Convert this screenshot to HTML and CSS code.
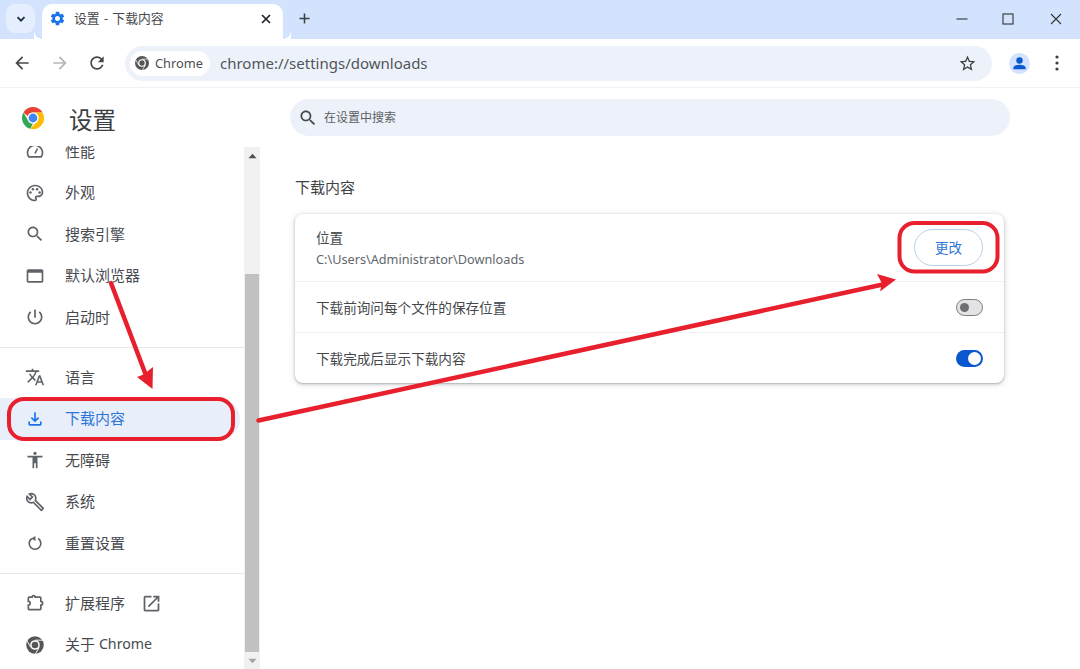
FILE: index.html
```html
<!DOCTYPE html>
<html lang="zh-CN">
<head>
<meta charset="utf-8">
<title>设置 - 下载内容</title>
<link rel="stylesheet" href="styles.css">
</head>
<body>
<header class="tabstrip">
  <div class="tabsearch"><svg class="ic12" viewBox="0 0 12 12"><path d="M2.5 4.2 6 7.7l3.5-3.5" fill="none" stroke="#1f2a44" stroke-width="1.8"/></svg></div>
  <div class="tab">
    <svg class="tabicon" viewBox="0 0 24 24"><path fill="#1a73e8" d="M19.14 12.94c.04-.3.06-.61.06-.94 0-.32-.02-.64-.07-.94l2.03-1.58c.18-.14.23-.41.12-.61l-1.92-3.32c-.12-.22-.37-.29-.59-.22l-2.39.96c-.5-.38-1.03-.7-1.62-.94l-.36-2.54c-.04-.24-.24-.41-.48-.41h-3.84c-.24 0-.43.17-.47.41l-.36 2.54c-.59.24-1.13.57-1.62.94l-2.39-.96c-.22-.08-.47 0-.59.22L2.74 8.87c-.12.21-.08.47.12.61l2.03 1.58c-.05.3-.09.63-.09.94s.02.64.07.94l-2.03 1.58c-.18.14-.23.41-.12.61l1.92 3.32c.12.22.37.29.59.22l2.39-.96c.5.38 1.03.7 1.62.94l.36 2.54c.05.24.24.41.48.41h3.84c.24 0 .44-.17.47-.41l.36-2.54c.59-.24 1.13-.56 1.62-.94l2.39.96c.22.08.47 0 .59-.22l1.92-3.32c.12-.22.07-.47-.12-.61l-2.01-1.58zM12 15.6c-1.98 0-3.6-1.62-3.6-3.6s1.62-3.6 3.6-3.6 3.6 1.62 3.6 3.6-1.62 3.6-3.6 3.6z"/></svg>
    <span class="tabtitle">设置 - 下载内容</span>
    <svg class="ic12" viewBox="0 0 12 12"><path d="M2 2l8 8M10 2l-8 8" stroke="#1f2329" stroke-width="1.7"/></svg>
  </div>
  <svg class="newtab" viewBox="0 0 12 12"><path d="M6 .5v11M.5 6h11" stroke="#3c4043" stroke-width="1.7"/></svg>
  <div class="winctl">
    <svg class="ic12" viewBox="0 0 12 12"><path d="M.5 6h11" stroke="#333" stroke-width="1.1"/></svg>
    <svg class="ic12" viewBox="0 0 12 12"><rect x="1" y="1" width="10" height="10" fill="none" stroke="#333" stroke-width="1.1"/></svg>
    <svg class="ic12" viewBox="0 0 12 12"><path d="M1 1l10 10M11 1L1 11" stroke="#333" stroke-width="1.1"/></svg>
  </div>
</header>

<div class="toolbar">
  <svg class="tbicon" viewBox="0 0 24 24"><path fill="#474747" d="M20 11H7.83l5.59-5.59L12 4l-8 8 8 8 1.41-1.41L7.83 13H20v-2z"/></svg>
  <svg class="tbicon" viewBox="0 0 24 24"><path fill="#b4b6b9" d="M4 11h12.17l-5.59-5.59L12 4l8 8-8 8-1.41-1.41L16.17 13H4v-2z"/></svg>
  <svg class="tbicon" viewBox="0 0 24 24"><path fill="#474747" d="M17.65 6.35C16.2 4.9 14.21 4 12 4c-4.42 0-7.99 3.58-7.99 8s3.57 8 7.99 8c3.73 0 6.84-2.55 7.73-6h-2.08c-.82 2.33-3.04 4-5.65 4-3.31 0-6-2.69-6-6s2.69-6 6-6c1.66 0 3.14.69 4.22 1.78L13 11h7V4l-2.35 2.35z"/></svg>
  <div class="omnibox">
    <div class="chip">
      <svg class="chipicon" viewBox="0 0 24 24"><use href="#mono-chrome"/></svg>
      <span>Chrome</span>
    </div>
    <span class="url">chrome://settings/downloads</span>
    <svg class="star" viewBox="0 0 24 24"><path fill="#3c4043" d="M22 9.24l-7.19-.62L12 2 9.19 8.63 2 9.24l5.46 4.73L5.82 21 12 17.27 18.18 21l-1.63-7.03L22 9.24zM12 15.4l-3.76 2.27 1-4.28-3.32-2.88 4.38-.38L12 6.1l1.71 4.04 4.38.38-3.32 2.88 1 4.28L12 15.4z"/></svg>
  </div>
  <div class="avatar"><svg viewBox="0 0 20 20"><circle cx="10" cy="6.8" r="3.4" fill="#0b57d0"/><path fill="#0b57d0" d="M3.5 16v-1.3c0-2.2 3.6-3.4 6.5-3.4s6.5 1.2 6.5 3.4V16z"/></svg></div>
  <svg class="menu" viewBox="0 0 4 16"><circle cx="2" cy="2" r="1.6" fill="#3c4043"/><circle cx="2" cy="8" r="1.6" fill="#3c4043"/><circle cx="2" cy="14" r="1.6" fill="#3c4043"/></svg>
</div>

<svg class="defs" aria-hidden="true"><defs>
  <g id="mono-chrome">
    <circle cx="12" cy="12" r="10.500" fill="#555"/>
    <circle cx="12" cy="12" r="5.800" fill="#fff"/>
    <circle cx="12" cy="12" r="4" fill="#555"/>
    <path d="M12 6.200h10M7 15 2.200 6.600M17 15l-5 8.600" stroke="#fff" stroke-width="1.100"/>
  </g>
</defs></svg>

<div class="page">
  <aside class="sidebar">
    <div class="brand">
      <svg class="logo" viewBox="0 0 24 24">
        <path fill="#ea4335" d="M12 1a11 11 0 0 1 9.53 5.5H12a5.5 5.5 0 0 0-5.2 3.7L2.47 6.5A11 11 0 0 1 12 1z"/>
        <path fill="#34a853" d="M2.47 6.5 7.2 14.7A5.5 5.5 0 0 0 12 17.5L9.3 22.7A11 11 0 0 1 2.47 6.5z"/>
        <path fill="#fbbc04" d="M21.53 6.5A11 11 0 0 1 9.3 22.7L14.8 16.7A5.5 5.5 0 0 0 12 6.5z"/>
        <circle cx="12" cy="12" r="5.6" fill="#fff"/>
        <circle cx="12" cy="12" r="4.4" fill="#4285f4"/>
      </svg>
      <h1 class="brandtitle">设置</h1>
    </div>
    <div class="sidebody">
      <nav class="nav">
        <div class="navscroll">
          <a class="item"><svg class="navicon" viewBox="0 0 24 24"><path fill="none" stroke="#5f6368" stroke-width="2" d="M4.5 19a9 9 0 1 1 15 0zM12 15l3-6"/></svg>性能</a>
          <a class="item"><svg class="navicon" viewBox="0 0 24 24"><path fill="#5f6368" d="M12 22C6.49 22 2 17.51 2 12S6.49 2 12 2s10 4.04 10 9c0 3.31-2.69 6-6 6h-1.77c-.28 0-.5.22-.5.5 0 .12.05.23.13.33.41.47.64 1.06.64 1.67A2.5 2.5 0 0 1 12 22zm0-18c-4.41 0-8 3.59-8 8s3.59 8 8 8c.28 0 .5-.22.5-.5a.54.54 0 0 0-.14-.35c-.41-.46-.63-1.05-.63-1.65a2.5 2.5 0 0 1 2.5-2.5H16c2.21 0 4-1.79 4-4 0-3.86-3.59-7-8-7z"/><circle cx="6.5" cy="11.5" r="1.5" fill="#5f6368"/><circle cx="9.5" cy="7.5" r="1.5" fill="#5f6368"/><circle cx="14.5" cy="7.5" r="1.5" fill="#5f6368"/><circle cx="17.5" cy="11.5" r="1.5" fill="#5f6368"/></svg>外观</a>
          <a class="item"><svg class="navicon" viewBox="0 0 24 24"><path fill="#5f6368" d="M15.5 14h-.79l-.28-.27C15.41 12.59 16 11.11 16 9.5 16 5.91 13.09 3 9.5 3S3 5.91 3 9.5 5.91 16 9.5 16c1.61 0 3.09-.59 4.23-1.57l.27.28v.79l5 4.99L20.49 19l-4.99-5zm-6 0C7.01 14 5 11.99 5 9.5S7.01 5 9.5 5 14 7.01 14 9.5 11.99 14 9.5 14z"/></svg>搜索引擎</a>
          <a class="item"><svg class="navicon" viewBox="0 0 24 24"><path fill="#5f6368" d="M20 4H4c-1.1 0-2 .9-2 2v12c0 1.1.9 2 2 2h16c1.1 0 2-.9 2-2V6c0-1.1-.9-2-2-2zm0 14H4V8h16v10z"/></svg>默认浏览器</a>
          <a class="item"><svg class="navicon" viewBox="0 0 24 24"><path fill="#5f6368" d="M13 3h-2v10h2V3zm4.83 2.17l-1.42 1.42C17.99 7.86 19 9.81 19 12c0 3.87-3.13 7-7 7s-7-3.13-7-7c0-2.19 1.01-4.14 2.58-5.42L6.17 5.17C4.23 6.82 3 9.26 3 12c0 4.97 4.03 9 9 9s9-4.03 9-9c0-2.74-1.23-5.18-3.17-6.83z"/></svg>启动时</a>
          <hr class="sep">
          <a class="item"><svg class="navicon" viewBox="0 0 24 24"><path fill="#5f6368" d="M12.87 15.07l-2.54-2.51.03-.03c1.74-1.94 2.98-4.17 3.71-6.53H17V4h-7V2H8v2H1v1.99h11.17C11.5 7.92 10.44 9.75 9 11.35 8.07 10.32 7.3 9.19 6.69 8h-2c.73 1.63 1.73 3.17 2.98 4.56l-5.09 5.02L4 19l5-5 3.11 3.11.76-2.04zM18.5 10h-2L12 22h2l1.12-3h4.75L21 22h2l-4.5-12zm-2.62 7l1.62-4.33L19.12 17h-3.24z"/></svg>语言</a>
          <a class="item active"><svg class="navicon" viewBox="0 0 24 24"><path fill="#1a73e8" d="M12 16l-5-5 1.4-1.45 2.6 2.6V4h2v8.15l2.6-2.6L17 11l-5 5zM6 20c-.55 0-1.02-.2-1.41-.59C4.2 19.02 4 18.55 4 18v-3h2v3h12v-3h2v3c0 .55-.2 1.02-.59 1.41-.39.39-.86.59-1.41.59H6z"/></svg>下载内容</a>
          <a class="item"><svg class="navicon" viewBox="0 0 24 24"><path fill="#5f6368" d="M12 2c1.1 0 2 .9 2 2s-.9 2-2 2-2-.9-2-2 .9-2 2-2zm9 7h-6v13h-2v-6h-2v6H9V9H3V7h18v2z"/></svg>无障碍</a>
          <a class="item"><svg class="navicon" viewBox="0 0 24 24"><path fill="#5f6368" d="M22.61 18.99l-9.08-9.08c.93-2.34.45-5.1-1.44-7C9.79.61 6.21.4 3.66 2.25L7.5 6.1 6.08 7.51 2.25 3.69C.4 6.23.61 9.82 2.91 12.11c1.86 1.86 4.57 2.35 6.89 1.48l9.11 9.11c.39.39 1.02.39 1.41 0l2.3-2.3c.39-.38.39-1.01-.01-1.41zm-3 1.6l-9.46-9.46c-.61.45-1.29.72-2 .82-1.36.2-2.79-.21-3.83-1.25C3.37 9.76 2.93 8.5 3 7.26l3.09 3.09 4.24-4.24-3.09-3.09c1.24-.07 2.49.37 3.44 1.31 1.08 1.08 1.49 2.57 1.24 3.96-.12.71-.42 1.37-.88 1.96l9.45 9.45-.88.88z"/></svg>系统</a>
          <a class="item"><svg class="navicon" viewBox="0 0 24 24"><path fill="none" stroke="#5f6368" stroke-width="2" d="M8.2 6.6a7 7 0 1 0 7.6 0"/><path fill="#5f6368" d="M12.5 3.5v6L7.5 6.5z"/></svg>重置设置</a>
          <hr class="sep">
          <a class="item"><svg class="navicon" viewBox="0 0 24 24"><path fill="none" stroke="#5f6368" stroke-width="2" d="M4.500 5H8.500a1.800 1.800 0 0 1 3.600 0H18a1 1 0 0 1 1 1v4a2.200 2.200 0 0 1 0 4.400V19a1 1 0 0 1-1 1H5a1 1 0 0 1-1-1v-4.500a2.200 2.200 0 0 0 0-4.400V6a1 1 0 0 1 .5-1z"/></svg>扩展程序<svg class="external" viewBox="0 0 24 24"><path fill="#5f6368" d="M19 19H5V5h7V3H5c-1.110 0-2 .9-2 2v14c0 1.100.89 2 2 2h14c1.100 0 2-.9 2-2v-7h-2v7zM14 3v2h3.590l-9.830 9.830 1.410 1.410L19 6.410V10h2V3h-7z"/></svg></a>
          <a class="item"><svg class="navicon" viewBox="0 0 24 24"><use href="#mono-chrome"/></svg>关于&nbsp;<span class="latin">Chrome</span></a>
        </div>
      </nav>
      <div class="scrollbar">
        <svg class="sbarrow" viewBox="0 0 10 6"><path d="M5 .5 9.500 5.500H.5z" fill="#505050"/></svg>
        <div class="sbtrack"><div class="sbthumb"></div></div>
        <svg class="sbarrow" viewBox="0 0 10 6"><path d="M5 5.500.5.500h9z" fill="#a3a3a3"/></svg>
      </div>
    </div>
  </aside>

  <main class="content">
    <div class="search">
      <svg class="searchicon" viewBox="0 0 24 24"><path fill="#474747" d="M15.500 14h-.79l-.28-.27C15.410 12.590 16 11.110 16 9.500 16 5.910 13.090 3 9.500 3S3 5.910 3 9.500 5.910 16 9.500 16c1.610 0 3.090-.59 4.230-1.570l.27.28v.79l5 4.990L20.490 19l-4.990-5zm-6 0C7.010 14 5 11.990 5 9.500S7.010 5 9.500 5 14 7.010 14 9.500 11.990 14 9.500 14z"/></svg>
      <span class="searchtext">在设置中搜索</span>
    </div>
    <h2 class="section">下载内容</h2>
    <section class="card">
      <div class="row first">
        <div class="rowtext">
          <div class="label">位置</div>
          <div class="sublabel">C:\Users\Administrator\Downloads</div>
        </div>
        <button class="change">更改</button>
      </div>
      <div class="row">
        <div class="label">下载前询问每个文件的保存位置</div>
        <span class="toggle off"><i></i></span>
      </div>
      <div class="row">
        <div class="label">下载完成后显示下载内容</div>
        <span class="toggle on"><i></i></span>
      </div>
    </section>
  </main>
</div>

<svg class="annotations" viewBox="0 0 1080 669">
  <rect class="mark" x="9" y="399" width="224" height="40" rx="15"/>
  <rect class="mark" x="899.500" y="223" width="98" height="48.500" rx="15"/>
  <path class="shaft" d="M111 283 147 378"/>
  <path class="head" d="M152.500 389 137 377 143.500 374.500 153 367z"/>
  <path class="shaft" d="M258.500 420.500 885 284"/>
  <path class="head" d="M896 279.500 877 274 882 283.500 880 291.500z"/>
</svg>
</body>
</html>
```
FILE: styles.css
```css
* { box-sizing: border-box; }
html, body { height: 100%; }
body {
  margin: 0;
  width: 1080px;
  height: 669px;
  overflow: hidden;
  position: relative;
  display: flex;
  flex-direction: column;
  background: #fff;
  color: #3c4043;
  font-family: "Noto Sans", "Noto Sans CJK SC", sans-serif;
}
svg { display: block; flex: none; }
.defs { width: 0; height: 0; position: absolute; }
.ic12 { width: 12px; height: 12px; }

.tabstrip {
  height: 39px;
  flex: none;
  background: #d3e3fd;
  display: flex;
  align-items: flex-start;
  padding: 4px 0 0 6px;
}
.tabsearch {
  width: 29px;
  height: 29px;
  border-radius: 9px;
  background: #e5eefc;
  display: flex;
  align-items: center;
  justify-content: center;
}
.tab {
  position: relative;
  margin-left: 7px;
  width: 241px;
  height: 35px;
  background: #fff;
  border-radius: 10px 10px 0 0;
  display: flex;
  align-items: center;
  padding: 0 11px 6px 7px;
}
.tab::before, .tab::after {
  content: "";
  position: absolute;
  bottom: 0;
  width: 8px;
  height: 8px;
  background: radial-gradient(circle at 0 0, #d3e3fd 7.5px, #fff 8px);
}
.tab::before { left: -8px; transform: scaleX(-1); }
.tab::after { right: -8px; }
.tabicon { width: 17px; height: 17px; }
.tabtitle { margin-left: 8px; padding-bottom: 2px; flex: 1; font-size: 12.8px; color: #45494e; white-space: nowrap; word-spacing: 1px; }
.newtab { width: 11px; height: 11px; margin: 9px 0 0 16px; }
.winctl {
  margin-left: auto;
  display: flex;
  gap: 36px;
  padding: 8.5px 18.5px 0 0;
}
.winctl svg:first-child { margin-right: -2px; }

.toolbar {
  height: 49px;
  flex: none;
  background: #fff;
  border-bottom: 1px solid #f0f1f3;
  border-radius: 10px 10px 0 0;
  display: flex;
  align-items: center;
  padding: 0 0 0 12px;
  gap: 17.5px;
}
.tbicon { width: 20px; height: 20px; }
.omnibox {
  margin-left: .5px;
  width: 867px;
  height: 35px;
  border-radius: 18px;
  background: #edf2fa;
  display: flex;
  align-items: center;
  padding: 0 15px 0 5px;
}
.chip {
  width: 80px;
  height: 25px;
  border-radius: 13px;
  background: #fff;
  display: flex;
  align-items: center;
  padding-left: 4px;
  gap: 5px;
  font-size: 12.8px;
  color: #4b4f54;
}
.chipicon { width: 16px; height: 16px; }
.url { margin-left: 10px; flex: 1; font-size: 15px; color: #51565b; }
.star { width: 19px; height: 19px; }
.avatar {
  margin-left: -1px;
  width: 21px;
  height: 21px;
  border-radius: 50%;
  background: #d3e3fd;
  padding: 1px;
}
.menu { width: 4px; height: 16px; margin-left: 8px; }

.page { flex: 1; min-height: 0; display: flex; }
.sidebar { width: 260px; flex: none; display: flex; flex-direction: column; }
.brand {
  height: 58px;
  flex: none;
  display: flex;
  align-items: center;
  padding: 0 0 0 21px;
  gap: 24px;
}
.logo { width: 24px; height: 24px; margin-top: 2px; }
.brandtitle { margin: 4px 0 0; font-size: 23.5px; font-weight: 400; color: #3c4043; }
.sidebody { flex: 1; min-height: 0; display: flex; }
.nav { width: 244px; flex: none; overflow: hidden; }
.navscroll { margin-top: -15.5px; }
.item {
  height: 41.5px;
  display: flex;
  align-items: center;
  width: 240px;
  padding: 0 0 2px 25px;
  font-size: 15px;
  color: #474a4f;
  border-radius: 0 21px 21px 0;
}
.item.active { background: #e8effb; color: #2f76d6; }
.navicon { width: 20px; height: 20px; margin: 2px 20px 0 0; }
.external { width: 21px; height: 21px; margin: 2px 0 0 16px; }
.latin { font-size: 14.2px; }
.sep { margin: 8.5px 0 9px; border: 0; border-top: 1px solid #e6e7e9; }

.scrollbar { width: 16px; background: #f1f1f1; display: flex; flex-direction: column; align-items: center; margin-top: 1px; }
.sbarrow { width: 9px; height: 6px; margin: 6px 0 5px; }
.sbtrack { flex: 1; width: 100%; padding: 110px 1px 0; }
.sbthumb { height: 378px; background: #c1c1c1; }

.content { flex: 1; min-width: 0; padding: 11px 70px 0 30px; }
.search {
  height: 37px;
  border-radius: 19px;
  background: #edf2fa;
  display: flex;
  align-items: center;
  padding-left: 8px;
  gap: 6px;
  font-size: 12px;
  color: #5b5f64;
}
.searchicon { width: 20px; height: 20px; }
.searchtext { padding-bottom: 2px; }
.section { margin: 40px 0 16px 5px; font-size: 15px; line-height: 22px; font-weight: 400; color: #3f4246; }
.card {
  margin-left: 5px;
  width: 709px;
  background: #fff;
  border-radius: 8px;
  box-shadow: 0 1px 2px rgba(60,64,67,.3), 0 1px 5px 1px rgba(60,64,67,.18);
}
.row {
  height: 51px;
  display: flex;
  align-items: center;
  justify-content: space-between;
  padding: 0 21px 0 21px;
  border-top: 1px solid #eeeff1;
}
.row > .label { margin-top: 2px; }
.row.first { height: 67px; border-top: 0; }
.rowtext { padding-top: 1px; }
.label { font-size: 13.6px; line-height: 20px; color: #44474b; }
.sublabel { margin-top: 1px; font-size: 12.7px; line-height: 20px; color: #63676c; }
.change {
  width: 69px;
  height: 37px;
  border: 1px solid #b9d0ea;
  border-radius: 19px;
  background: #fff;
  color: #2f76d6;
  font: inherit;
  font-size: 13.5px;
  padding: 0 0 2px 0;
}
.toggle {
  width: 27px;
  height: 17px;
  border-radius: 9px;
  display: flex;
  align-items: center;
}
.toggle.off { background: #e3e3e3; border: 1px solid #7a7c7f; padding-left: 3px; }
.toggle.off i { width: 9px; height: 9px; border-radius: 50%; background: #6d6f72; }
.toggle.on { background: #0b57d0; justify-content: flex-end; padding-right: 2px; }
.toggle.on i { width: 13px; height: 13px; border-radius: 50%; background: #fff; }

.annotations { position: absolute; left: 0; top: 0; width: 1080px; height: 669px; pointer-events: none; }
.mark { fill: none; stroke: #e81f2d; stroke-width: 4; }
.shaft { fill: none; stroke: #e81f2d; stroke-width: 4.5; stroke-linecap: round; }
.head { fill: #e81f2d; }
```
